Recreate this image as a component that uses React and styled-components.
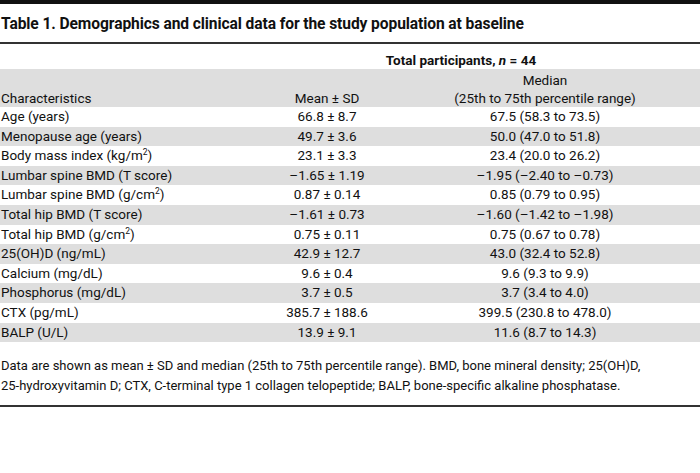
import React from 'react'
import styled, { createGlobalStyle } from 'styled-components'

const GlobalStyle = createGlobalStyle`
  body {
    margin: 0;
    background: #fff;
    color: #111;
    font-family: Roboto, 'Liberation Sans', sans-serif;
  }
`

const Page = styled.div`
  width: 700px;
`

const TopBar = styled.div`
  height: 4px;
  background: #111;
`

const Title = styled.h1`
  margin: 0;
  padding: 10px 0 8px 1px;
  font-size: 15.6px;
  line-height: 20px;
  font-weight: 700;
  letter-spacing: -0.1px;
`

const Rule = styled.div`
  height: 2px;
  background: #333;
`

const Grid = styled.div`
  display: grid;
  grid-template-columns: 243px 168px 268px 21px;
  font-size: 13.5px;
`

const Row = styled.div`
  display: contents;
`

const Cell = styled.div`
  background: ${props => (props.$shaded ? '#dedede' : '#fff')};
  text-align: ${props => props.$align || 'center'};
  height: 19.6px;
  line-height: 19.6px;
  padding-left: ${props => (props.$align === 'left' ? '1px' : '0')};
  white-space: nowrap;
`

const GroupHead = styled.div`
  grid-column: 2 / span 2;
  text-align: center;
  font-weight: 700;
  padding-top: 8px;
  line-height: 17px;
`

const HeadCell = styled.div`
  display: flex;
  flex-direction: column;
  justify-content: flex-end;
  align-items: ${props => (props.$align === 'left' ? 'flex-start' : 'center')};
  background: #dedede;
  padding: 2px 0 0 ${props => (props.$align === 'left' ? '1px' : '0')};
  line-height: 18px;
  white-space: nowrap;
`

const Sup = styled.span`
  font-size: 8.5px;
  vertical-align: 5px;
  line-height: 0;
`

const Note = styled.p`
  margin: 14px 0 0 1px;
  font-size: 13px;
  line-height: 20px;
`

const BottomRule = styled.div`
  margin-top: 9px;
  height: 2px;
  background: #333;
`

const rows = [
  ['Age (years)', '66.8 ± 8.7', '67.5 (58.3 to 73.5)'],
  ['Menopause age (years)', '49.7 ± 3.6', '50.0 (47.0 to 51.8)'],
  [<>Body mass index (kg/m<Sup>2</Sup>)</>, '23.1 ± 3.3', '23.4 (20.0 to 26.2)'],
  ['Lumbar spine BMD (T score)', '–1.65 ± 1.19', '–1.95 (–2.40 to –0.73)'],
  [<>Lumbar spine BMD (g/cm<Sup>2</Sup>)</>, '0.87 ± 0.14', '0.85 (0.79 to 0.95)'],
  ['Total hip BMD (T score)', '–1.61 ± 0.73', '–1.60 (–1.42 to –1.98)'],
  [<>Total hip BMD (g/cm<Sup>2</Sup>)</>, '0.75 ± 0.11', '0.75 (0.67 to 0.78)'],
  ['25(OH)D (ng/mL)', '42.9 ± 12.7', '43.0 (32.4 to 52.8)'],
  ['Calcium (mg/dL)', '9.6 ± 0.4', '9.6 (9.3 to 9.9)'],
  ['Phosphorus (mg/dL)', '3.7 ± 0.5', '3.7 (3.4 to 4.0)'],
  ['CTX (pg/mL)', '385.7 ± 188.6', '399.5 (230.8 to 478.0)'],
  ['BALP (U/L)', '13.9 ± 9.1', '11.6 (8.7 to 14.3)'],
]

export default function App() {
  return (
    <Page>
      <GlobalStyle />
      <TopBar />
      <Title>Table 1. Demographics and clinical data for the study population at baseline</Title>
      <Rule />
      <Grid>
        <div />
        <GroupHead>
          Total participants, <i>n</i> = 44
        </GroupHead>
        <div />
        <Row>
          <HeadCell $align="left">Characteristics</HeadCell>
          <HeadCell>Mean ± SD</HeadCell>
          <HeadCell>
            <span>Median</span>
            <span>(25th to 75th percentile range)</span>
          </HeadCell>
          <HeadCell />
        </Row>
        {rows.map((r, i) => (
          <Row key={i}>
            <Cell $shaded={i % 2 === 1} $align="left">{r[0]}</Cell>
            <Cell $shaded={i % 2 === 1}>{r[1]}</Cell>
            <Cell $shaded={i % 2 === 1}>{r[2]}</Cell>
            <Cell $shaded={i % 2 === 1} />
          </Row>
        ))}
      </Grid>
      <Note>
        Data are shown as mean ± SD and median (25th to 75th percentile range). BMD, bone mineral density; 25(OH)D,
        <br />
        25-hydroxyvitamin D; CTX, C-terminal type 1 collagen telopeptide; BALP, bone-specific alkaline phosphatase.
      </Note>
      <BottomRule />
    </Page>
  )
}
